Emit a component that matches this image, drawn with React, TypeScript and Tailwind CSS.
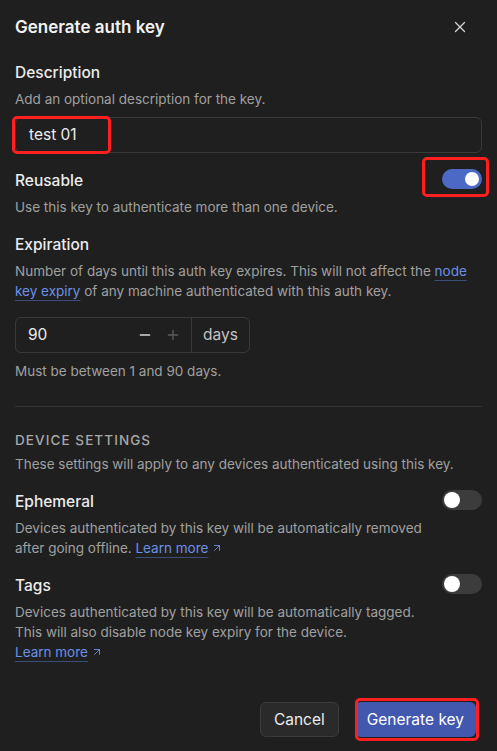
import React from 'react';
import { ArrowUpRight, Minus, Plus, X } from 'lucide-react';

const Toggle = ({ on }: { on?: boolean }) => (
  <div
    className={
      on
        ? 'w-10 h-5 rounded-full bg-[#4d69c6] flex items-center justify-end pr-[3px] shrink-0 -mt-[2px]'
        : 'w-10 h-5 rounded-full bg-[#3c3c3c] flex items-center pl-[2px] shrink-0 -mt-[2px]'
    }
  >
    <div className={on ? 'w-[14px] h-[14px] rounded-full bg-white' : 'w-4 h-4 rounded-full bg-white'} />
  </div>
);

const LearnMore = () => (
  <a className="text-[#6b91e6] underline decoration-[#3a4c78] underline-offset-4 inline-flex items-center gap-[3px]">
    Learn more <ArrowUpRight className="w-3 h-3" strokeWidth={1.75} />
  </a>
);

export default function App() {
  return (
    <div
      className="relative w-[497px] h-[751px] bg-[#1f1f1f] text-[#ececec] px-[15px] pt-[15px] overflow-hidden"
      style={{ fontFamily: 'Inter, "Noto Sans", sans-serif' }}
    >
      {/* Header */}
      <div className="flex items-center justify-between h-6">
        <h1 className="text-[17px] leading-6 font-semibold text-[#f2f2f2]">Generate auth key</h1>
        <X className="w-[18px] h-[18px] text-[#d6d6d6] mr-[13px]" strokeWidth={1.75} />
      </div>

      {/* Description */}
      <div className="mt-6 text-[15.5px] leading-5 font-medium">Description</div>
      <div className="mt-[6px] text-[13.5px] leading-5 text-[#a0a0a0]">Add an optional description for the key.</div>
      <div className="mt-2 h-9 rounded-md border border-[#3a3a3a] flex items-center px-[13px] text-[15.5px]">test 01</div>

      {/* Reusable */}
      <div className="mt-[18px] flex items-start justify-between">
        <div className="text-[15.5px] leading-5 font-medium">Reusable</div>
        <Toggle on />
      </div>
      <div className="mt-[6px] text-[13.5px] leading-5 text-[#a0a0a0]">Use this key to authenticate more than one device.</div>

      {/* Expiration */}
      <div className="mt-[18px] text-[15.5px] leading-5 font-medium">Expiration</div>
      <div className="mt-[6px] text-[13.5px] leading-5 text-[#a0a0a0] whitespace-nowrap">
        Number of days until this auth key expires. This will not affect the{' '}
        <a className="text-[#6b91e6] underline decoration-[#3a4c78] underline-offset-4">
          node
          <br />
          key expiry
        </a>{' '}
        of any machine authenticated with this auth key.
      </div>
      <div className="mt-4 flex h-9 w-[235px] rounded-md border border-[#3a3a3a]">
        <div className="flex-1 flex items-center pl-[12px] pr-[10px] text-[15.5px] border-r border-[#3a3a3a]">
          <span className="flex-1">90</span>
          <Minus className="w-4 h-4 text-[#d8d8d8]" strokeWidth={2} />
          <Plus className="w-4 h-4 ml-3 text-[#5c5c5c]" strokeWidth={2} />
        </div>
        <div className="w-[57px] flex items-center justify-center text-[15.5px] text-[#c4c4c4]">days</div>
      </div>
      <div className="mt-2 text-[13.5px] leading-5 text-[#a0a0a0]">Must be between 1 and 90 days.</div>

      <div className="mt-[25px] h-px bg-[#333333]" />

      {/* Device settings */}
      <div className="mt-[23px] text-[13.5px] leading-5 tracking-[0.08em] uppercase text-[#a8a8a8] font-medium">Device settings</div>
      <div className="mt-1 text-[13.5px] leading-5 text-[#a0a0a0]">These settings will apply to any devices authenticated using this key.</div>

      <div className="mt-[18px] flex items-start justify-between">
        <div className="text-[15.5px] leading-5 font-medium">Ephemeral</div>
        <Toggle />
      </div>
      <div className="mt-[6px] text-[13.5px] leading-5 text-[#a0a0a0]">
        Devices authenticated by this key will be automatically removed
        <br />
        after going offline. <LearnMore />
      </div>

      <div className="mt-[18px] flex items-start justify-between">
        <div className="text-[15.5px] leading-5 font-medium">Tags</div>
        <Toggle />
      </div>
      <div className="mt-[6px] text-[13.5px] leading-5 text-[#a0a0a0]">
        Devices authenticated by this key will be automatically tagged.
        <br />
        This will also disable node key expiry for the device.
        <br />
        <LearnMore />
      </div>

      {/* Footer */}
      <div className="mt-10 flex justify-end gap-4 pr-[6px]">
        <button className="h-[35px] px-[13px] rounded-md bg-[#2a2a2a] border border-[#3c3c3c] text-[15.5px] text-[#ececec]">Cancel</button>
        <button className="h-[35px] px-[12px] rounded-md bg-[#4258ae] text-[15.5px] text-white">Generate key</button>
      </div>

      {/* Red annotation boxes */}
      <div className="absolute left-[12px] top-[116px] w-[99px] h-[38px] border-[3px] border-[#ff1f1f] rounded-[5px]" />
      <div className="absolute left-[422px] top-[157px] w-[67px] h-[40px] border-[3px] border-[#ff1f1f] rounded-[5px]" />
      <div className="absolute left-[355px] top-[698px] w-[124px] h-[43px] border-[3px] border-[#ff1f1f] rounded-[5px]" />
    </div>
  );
}
